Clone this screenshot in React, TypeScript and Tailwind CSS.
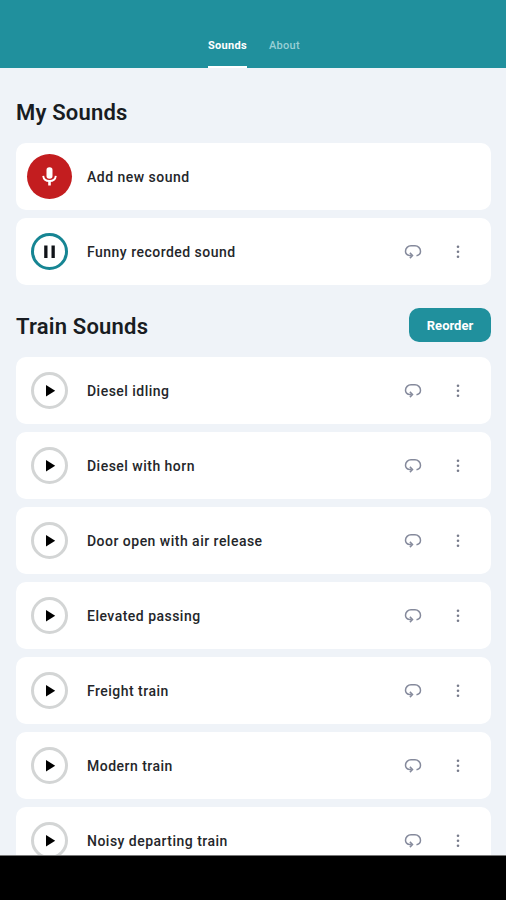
import clsx from 'clsx';

interface Sound {
  name: string;
  playing?: boolean;
}

const mySounds: Sound[] = [{ name: 'Funny recorded sound', playing: true }];

const trainSounds: Sound[] = [
  { name: 'Diesel idling' },
  { name: 'Diesel with horn' },
  { name: 'Door open with air release' },
  { name: 'Elevated passing' },
  { name: 'Freight train' },
  { name: 'Modern train' },
  { name: 'Noisy departing train' },
];

function MicIcon() {
  return (
    <svg width="20" height="20" viewBox="0 0 20 20" fill="none">
      <rect x="6.500" y="0.300" width="6" height="11.500" rx="2.800" fill="#fff" />
      <path d="M3.200 8.800c.4 3.600 3 5.200 6.300 5.200s5.900-1.600 6.300-5.200" stroke="#fff" strokeWidth="1.900" />
      <path d="M9.500 13.500v5" stroke="#fff" strokeWidth="2.600" />
    </svg>
  );
}

function LoopIcon() {
  return (
    <svg width="18" height="16" viewBox="0 0 18 16" fill="none" stroke="#858a9c" strokeWidth="1.500">
      <path d="M7.500 11.500H5.400C2.900 11 1.500 9.300 1.500 7.200 1.500 4.200 4 1.800 7 1.800h4c3 0 5.500 2.400 5.500 5.400 0 2.300-1.500 4-4 4.500" />
      <path d="M5.900 8.900 8.500 11.500l-2.600 2.600" />
    </svg>
  );
}

function DotsIcon() {
  return (
    <svg width="4" height="16" viewBox="0 0 4 16" fill="#777b8b">
      <circle cx="2" cy="2.700" r="1.300" />
      <circle cx="2" cy="7.700" r="1.300" />
      <circle cx="2" cy="12.700" r="1.300" />
    </svg>
  );
}

function SoundRow({ sound }: { sound: Sound }) {
  return (
    <div className="flex h-[67px] shrink-0 items-center rounded-[10px] bg-white pl-[15px] pr-[31px]">
      <button
        className={clsx(
          'flex h-[37px] w-[37px] items-center justify-center rounded-full border-[3px]',
          sound.playing ? 'border-[#168593]' : 'border-[#d3d5d5]'
        )}
      >
        {sound.playing ? (
          <svg width="12" height="14" viewBox="0 0 12 14" fill="#101318">
            <rect x="0.200" y="0.500" width="3.300" height="12.500" />
            <rect x="7.500" y="0.500" width="3.300" height="12.500" />
          </svg>
        ) : (
          <svg width="14" height="14" viewBox="0 0 14 14" fill="#000">
            <path d="M3 1v11.400L12.200 6.700z" />
          </svg>
        )}
      </button>
      <span className="ml-[19px] flex-1 text-[14px] font-medium leading-5 tracking-[0.48px] text-[#24262a]">
        {sound.name}
      </span>
      <div className="flex items-center gap-[34px]">
        <LoopIcon />
        <DotsIcon />
      </div>
    </div>
  );
}

export default function App() {
  return (
    <div className="flex h-[900px] w-[506px] flex-col overflow-hidden bg-[#eff3f8] font-['Roboto',sans-serif]">
      <header className="flex h-[68px] shrink-0 items-end justify-center gap-[22px] bg-[#20909d] pl-[2px] text-[11px] leading-4 tracking-[0.3px]">
        <div className="flex h-[30px] flex-col justify-between border-b-2 border-white font-bold text-white">
          Sounds
        </div>
        <div className="h-[30px] font-medium text-[#98cfd5]">About</div>
      </header>

      <main className="flex min-h-0 flex-1 flex-col overflow-hidden pl-4 pr-[15px]">
        <h2 className="mt-[29px] text-[22px] font-semibold leading-8 tracking-[0.2px] text-[#181c22]">My Sounds</h2>
        <div className="mt-[14px] flex flex-col gap-2">
          <div className="flex h-[67px] items-center rounded-[10px] bg-white pl-[11px]">
            <button className="flex h-[45px] w-[45px] items-center justify-center rounded-full bg-[#c31d1f]">
              <MicIcon />
            </button>
            <span className="ml-[15px] text-[14px] font-medium leading-5 tracking-[0.48px] text-[#24262a]">
              Add new sound
            </span>
          </div>
          {mySounds.map((s) => (
            <SoundRow key={s.name} sound={s} />
          ))}
        </div>

        <div className="mt-[23px] flex h-[34px] shrink-0 items-center justify-between">
          <h2 className="pt-[3px] text-[22px] font-semibold leading-8 tracking-[0.2px] text-[#181c22]">Train Sounds</h2>
          <button className="h-[34px] w-[82px] rounded-[10px] bg-[#20909d] pt-px text-[13px] font-bold text-white">
            Reorder
          </button>
        </div>
        <div className="mt-[15px] flex flex-col gap-2">
          {trainSounds.map((s) => (
            <SoundRow key={s.name} sound={s} />
          ))}
        </div>
      </main>

      <div className="h-[45px] shrink-0 border-t border-[#777] bg-black" />
    </div>
  );
}
